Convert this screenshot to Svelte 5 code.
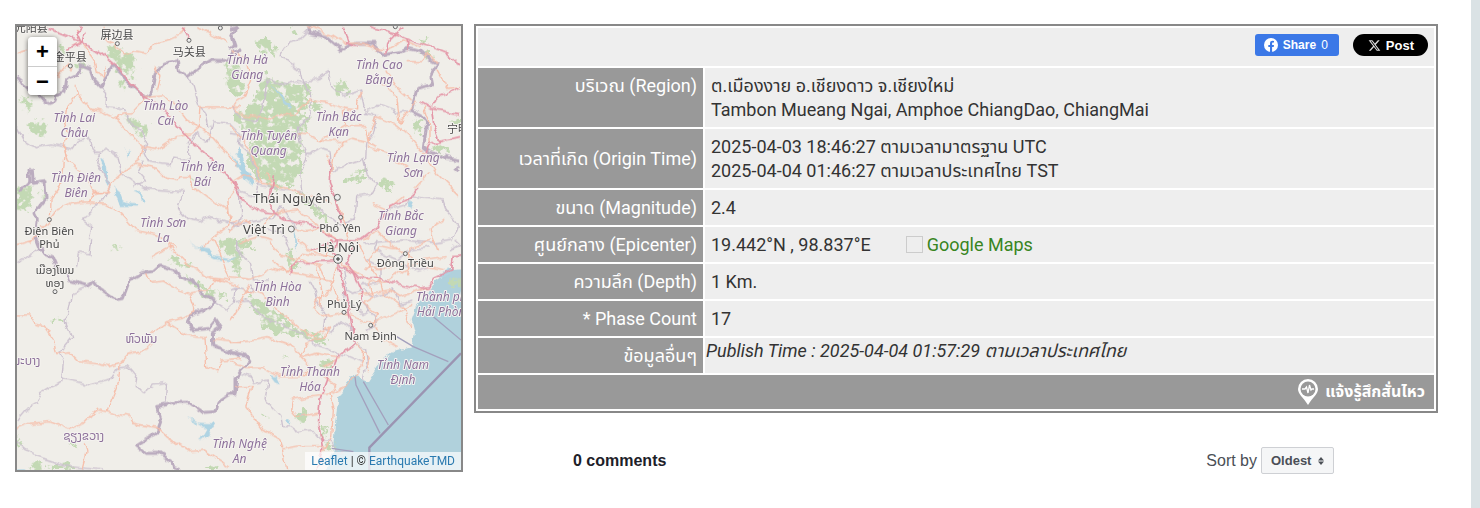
<script lang="ts">
	type Tile = {
		x: number;
		y: number;
		sea?: string;
		forest: string;
		water: string;
		road: string;
		main: string;
		province: string;
		national: string;
	};

	// Map geometry, one entry per quadrant
	const tiles: Tile[] = [
		{
			x: 0,
			y: 30,
			forest:
				'M320 110l25-3 12 15 20 0 27 18 4 30-12 12 15 23-12 4-25-20-22-10-5-25-17-18zM357 213l18-3 2 15-12 12-10-8zM375 320l20 2 30 18 20 10 0 22-12 10-30-22-18-14zM55 272l14-2 24-4 2 18-10 14-5 8-2-18-24-6zM85 342l18-6 20-3 20 8-8 18 4 20-18 6-6-14-22-8zM50 532l40-5 0 50-7 24-33-2zM122 545l12-5 2 28-8-12zM674 165l20-10 26 5v100l-20-10-14-22-6-30zM660 690l20-12 15 6 25 20v16h-62zM335 708l20 0 8 6-25 0zM170 100l20 8 5 20-20-5zM228 165l14-10 18 20-25 5zM565 510l20-6-6 10z',
			water:
				'M300 440l14 10 8 30-2 22 10 20-8 8-10-30-4-30zM340 530l18 15 10 26 20 6 24 4-2 6-30-2-20 0-14-26zM400 545l20-2 15 30-8 2-8-22zM372 410l10 22 12-12-10 24zM710 430l10-20v52l-14-30z',
			road:
				'M50 128L85 118M228 60L245 95L205 118M250 100L285 150 292 185 312 198 318 170M312 48L318 90 345 100M345 110L370 130 400 122 440 130 470 95 510 85 545 70 555 48M595 50L640 75 680 98M225 225L232 250 200 290 195 330 205 370 190 410 195 440 185 520 150 570 148 625M232 250L250 275 275 298 310 305 345 322 372 312 395 312 430 275 432 262M345 322L380 360 410 395 430 412 420 450 385 475 335 520 320 545 280 545 258 500 205 455 190 410M430 260L490 255 530 290 560 330 595 350 570 372 530 380 500 400 470 420 430 412M595 350L600 290 720 292M600 350L640 385 680 430 720 480M410 462L470 475 500 505 535 512 540 500 570 500 580 530 620 560 680 595 690 640 720 630M685 610L680 570 710 530M148 630L170 600 215 580 270 575 320 580 360 610 405 660 470 675 530 715M330 545L275 550 270 575M600 720L640 685 685 650 690 610M470 240L480 200 465 170M170 200L200 165 215 180M50 705L100 690M148 630L90 700',
			main:
				'M130 50L205 80 245 95 300 130 370 190 432 260 500 305 550 370 610 425 660 470 720 540M245 95L232 65 245 50M205 118L250 95 255 70M548 50L568 90',
			province:
				'M302 230L320 250 318 290 372 296 385 330 425 365 440 400 432 430 445 455 510 465 518 445 570 450 568 405 592 370 625 395 640 335 690 340 720 370M560 200L580 230 595 285 620 310 630 350M50 345L75 395 100 412 150 402 220 415 235 390 265 385 285 430 300 430 320 418 355 440 365 490 430 535 550 545 535 595 560 625 600 635 625 622 690 640 712 650M430 455L415 485 437 510 400 530M300 430L290 455 330 530 310 565 260 620 245 625 275 650 268 690M590 365L560 400',
			national:
				'M50 200L85 230 120 262 150 280 165 275 170 255 195 245 200 210 230 195 245 165 270 175 280 205 302 230 320 195 338 165 435 262 455 250 465 190 490 160 528 150 535 185 560 200 600 170 630 150 680 152 705 125 720 115M50 540L75 530 90 515 87 482 97 482 100 520 135 515 138 568 105 610 115 630 108 690 120 720'
		},
		{
			x: 690,
			y: 30,
			forest:
				'M108 180l20 30 50 15 50-5 14 25-10 45-18 20 28 10-20 50-20 20 20 35-10 30 8 28-26 30-10 25-20-15-24 20-40-30-20-8-30-58 20-60-30-32-25-18 0-30 45-20 15-30 10-40zM80 95l30-15 30 45-5 18-25-12-28-14zM0 165l20 10 10 40 12 35-20 15-22-15zM315 215l20-8 20 15-2 30-32-5zM555 350l-10-10 12-18 20 10-4 35-20 5zM610 408l25-5 22 15-24 15-20-10zM340 510l30-20 35-10 0 25-40 10-16 10zM445 520l30-15 12 20-6 20-20-5zM198 540l20 5 30 25 32 40 14 16-4 12-24-14-26-30-30-28zM565 90l20-10 12 10-12 8zM568 128l35-5 0 20-20 6zM20 695l30-10 20 20-18 15-40 0zM180 55l18-4 4 18-12 6zM665 340l25-20v28zM236 272l30 5 8 18-30 5zM130 608l20-6-6 16-12 6zM195 460l20 5-12 12z',
			water:
				'M0 430L30 470 28 435 35 430 50 480 75 520 68 528 40 505zM112 212L155 260 185 290 186 298 150 265zM535 575l20 3-8 20-8-8zM190 650l6 30 5 40-8-20z',
			road:
				'M0 292L40 265 65 205 50 150 8 125M10 295L40 315 130 325 165 310 195 315 235 270 305 280 340 295 380 300 380 275 400 245M0 345L60 420 100 520M205 372L235 375 270 392 310 370 345 350 405 350 415 395 440 410M410 395L370 385 345 395 270 392M340 300L345 350M440 320L500 345 540 380 590 440 620 490 690 560M440 320L420 370 415 410 470 430 540 480M455 215L500 260 510 340 560 270M470 185L500 230 545 270M305 480L315 430 345 395M320 575L345 640 360 690M0 520L40 495 100 520 150 530 250 560 300 580M305 490L290 440M400 690L440 660 500 720M425 580L470 600 520 560M550 540L600 485M530 155L570 155 590 130 625 160M620 180L650 235 690 230M230 50L300 75 340 100 400 100 460 120M470 120L520 90 570 110M620 720L600 660 640 630M0 665L40 630 85 660 130 610 200 600 260 640 300 680M30 700L90 680 130 690M600 400L600 350 580 290M180 650L230 662 270 655 320 688M110 490L125 520 150 530',
			main:
				'M0 505L40 570 90 605 135 610 170 630 250 645 300 680 320 690M135 610L115 570 130 500M300 450L298 520 320 570 335 640M320 690L390 690 440 650 480 590 530 570 565 535M340 50L355 100 380 110M468 130L470 100 520 50M420 50L500 72 540 90 600 110 650 130 690 165M535 90L538 120M568 275L600 295 690 312M605 290L625 260 690 232M605 295L612 350 630 395 600 400 588 430M630 395L690 380M245 720L320 690 315 720',
			province:
				'M235 60L210 85 180 95 150 140 210 180 218 215 245 260 238 320 205 350 210 395 235 435 270 415 300 425 305 480 400 445 412 495 440 520 420 555 380 560 375 620 350 640M5 290L30 320 75 335 95 300 105 250 112 205 170 225 200 215 260 210 295 185 305 230 340 260 395 240 405 285 400 310 440 315 430 370 410 400 405 480M400 310L435 295 450 280 490 295 500 310 545 305M235 435L212 490 220 560 300 620 330 645 375 625M0 370L30 375 25 400 60 430 90 510 85 525 160 540 215 545M85 520L75 560 30 545 35 610 25 650 0 660M0 640L50 640 90 630 130 625 150 590 200 650M440 650L470 600 530 585 545 555 640 570 650 600 685 650 670 690 610 700 520 690 400 700M60 680L110 655 150 665 180 720M690 700L660 720',
			national:
				'M0 58L20 52 5 75 15 105 0 120M235 48L240 70 290 80 335 120 375 100 430 100 460 135 510 125 535 115 575 125 600 150 625 160 600 200 605 225 560 235 545 300 575 315 590 340 580 415 600 430 655 445 690 450M690 470L678 480 690 490'
		},
		{
			x: 0,
			y: 720,
			forest:
				'M155 236h32v13h-32zM510 50l30 15 30 10 5 14-30-6-30-14zM550 100l35 20 20 10 10 20 65 8 0 20-50 0-20-25-40-25zM660 5l50-5 10 25v80l-25-18-15-38zM155 672l60-2 10 20h-75zM90 675l20-12 30 5-5 22-40 0zM50 585l14 24-10 15-4 0zM615 690l20-12 18 12zM335 13l25 6-5 4zM200 600l20 10 8 12-20-5z',
			water:
				'M565 0L590 18 625 25 640 45 690 55 720 50 690 60 640 54 610 36zM590 548L645 550 630 578 600 605 622 566zM560 530l30 18-5 3zM50 685l25 0-10 5z',
			road:
				'M50 225L90 225 105 250 130 255 160 300 170 340 210 335 240 365 290 372 325 380 360 370 390 340 440 330 470 300M440 100L450 125 490 120 530 145 570 162 625 150 640 115 690 120 660 40 640 0M570 165L585 215 550 235 500 245 450 280M500 245L560 285 615 290 620 380 650 395 665 360 720 355M450 50L510 20 560 75 635 115 720 140M505 0L510 30M360 375L355 430 330 490 320 515 390 530 400 550 470 562 500 590 570 635 610 630 690 685M320 515L290 508 250 550 210 570 150 545 90 550 50 565M250 610L258 640 245 690M640 300L720 308',
			main: '',
			province:
				'M50 72L80 50 115 30M265 140L215 160 205 220 195 240 215 290 175 340 190 370 185 415 230 425 270 435 330 420 350 385 385 380 410 410 405 435 430 460 460 435 500 430 495 490M185 420L125 455 110 490 75 510 50 540M230 80L235 38 270 45 275 0M50 605L80 630 130 655 210 680 310 690M645 185L680 208 700 190 705 150 720 145M710 0L710 30 720 50',
			national:
				'M115 0L130 40 155 50 170 85 205 100 212 122 265 138 285 125 300 145 350 178 370 175 390 120 430 98 460 95 480 78 525 90 540 110 580 125 600 155 645 180 630 200 575 225 565 245 580 270 630 265 650 240 665 262 637 280 638 315 720 348M720 405L705 415 705 455 650 490 645 515 610 518 570 490 520 490 470 500 482 545 470 580 410 618 440 640 480 640 515 665 520 682 540 690'
		},
		{
			x: 690,
			y: 720,
			sea: 'M700 85L650 88 640 108 615 125 600 150 560 200 545 240 555 280 548 318 500 330 470 350 440 378 410 425 395 420 375 400 350 430 325 480 315 550 310 620 285 720H700z',
			forest:
				'M50 175l30-5 40 30 50 40 30 25 50 5 35 20 5 20-25 0-50-20-60-10-30 0-25-25-20-35zM165 35l15-5 30 55-10 12-25-25zM0 0l30 10 5 45-25 15-10-10zM655 120l25-8 15 5v35l-25-5zM200 525l15-15 20 5-10 35-30-5zM265 370l15-10 25 5-8 20-20 0zM275 555l15 0 0 40-15 0zM285 612l20-5 8 20-25 5zM155 340l20 12-10 0zM95 520l15 10-10 5zM35 610l10 15-8 0z',
			water: 'M120 405l20 5 10 20-15-5zM655 85l10 15-15 10-30 0zM165 540l15-5-4 20zM210 520l15 5-5 10z',
			road:
				'M0 110L60 118 130 85 180 100 300 120 320 160 340 200M0 308L60 300 110 290 170 310 220 350 260 340 320 350M0 365L50 385 100 385 150 410 220 410 240 380 210 350 230 310 280 290 300 260M15 440L70 440 50 500 100 570 150 600 160 630 210 620 290 620M270 400L320 440 300 465 240 470 190 480 185 510 200 530 265 520M300 465L310 510 305 590 275 640M305 465L360 430 380 400 400 370 400 330 380 310M320 80L300 150 270 170 250 200 280 230 340 215 420 250 500 220 550 190M340 75L400 110 440 130 480 120 520 90 560 70 640 90M380 0L400 50 450 120 460 160 520 200 540 260M400 190L440 220 430 250 460 300 500 320M300 0L290 50 220 40 170 100 130 60M120 5L160 50 220 60 270 80 290 120M385 165L480 150 510 170 600 140M530 100L540 30 600 0M40 150L100 165 130 200 220 270 250 290 300 260M380 310L420 350 415 390M280 380L330 350M0 240L30 190 60 130M160 630L170 690M430 100L420 60 450 20 500 30 560 60 650 50M260 85L275 150 270 200M350 90L330 60 240 30 200 0M400 85L480 85 520 70M420 125L430 170 400 190',
			main:
				'M180 105L190 70 320 65M325 80L345 150 360 230 375 310 320 350 300 400 270 480 265 550 278 625 260 690M325 75L370 100 395 160 398 190M350 70L385 115 440 112 500 130 570 145 600 140 610 115 665 90 670 50 695 48M300 0L320 60M350 70L370 30 365 0',
			province:
				'M0 150L20 145 70 155 65 130M15 185L50 180 100 235 200 270 260 315 320 335 400 370M240 120L255 150 265 190 285 225 280 270 300 280 330 245 360 260 375 310 410 325 415 370 400 400 398 420M340 80L350 150 370 160 400 150 430 170 490 150 510 190 550 180M410 60L450 80 450 130 390 135M35 400L60 410 70 430 115 420 105 480 150 530 155 560 180 560 200 575 245 570 270 600 300 600 320 635 370 635M400 190L435 230 440 255 410 275M440 0L430 30 500 60 550 30 600 20M680 0L690 10M20 0L20 30 65 75 70 120 120 120M500 60L560 90 600 80M345 150L340 180 400 220 420 210',
			national: 'M0 335L45 345 60 365 35 390 20 415 15 465 0 465'
		}
	];

	const seaLimits = 'M1190 1010L1240 1040 1345 1085M1300 950L1383 1020M1065 1130L1068 1155 1140 1300M1090 1145L1165 1275M995 1345L1060 1355';

	type Label = { kind: string; x: number; y: number; lines: string[] };

	const labels: Label[] = [
		{ kind: 'han', x: 94, y: 96, lines: ['元阳县'] },
		{ kind: 'han', x: 351, y: 116, lines: ['屏边县'] },
		{ kind: 'han', x: 568, y: 167, lines: ['马关县'] },
		{ kind: 'han', x: 211, y: 184, lines: ['金平县'] },
		{ kind: 'han', x: 1374, y: 398, lines: ['宁明'] },
		{ kind: 'region', x: 223, y: 367, lines: ['Tỉnh Lai', 'Châu'] },
		{ kind: 'region', x: 497, y: 331, lines: ['Tỉnh Lào', 'Cai'] },
		{ kind: 'region', x: 228, y: 545, lines: ['Tỉnh Điện', 'Biên'] },
		{ kind: 'region', x: 607, y: 514, lines: ['Tỉnh Yên', 'Bái'] },
		{ kind: 'region', x: 490, y: 680, lines: ['Tỉnh Sơn', 'La'] },
		{ kind: 'region', x: 742, y: 192, lines: ['Tỉnh Hà', 'Giang'] },
		{ kind: 'region', x: 1138, y: 207, lines: ['Tỉnh Cao', 'Bằng'] },
		{ kind: 'region', x: 1016, y: 363, lines: ['Tỉnh Bắc', 'Kạn'] },
		{ kind: 'region', x: 806, y: 419, lines: ['Tỉnh Tuyên', 'Quang'] },
		{ kind: 'region', x: 1240, y: 486, lines: ['Tỉnh Lạng', 'Sơn'] },
		{ kind: 'region', x: 1203, y: 660, lines: ['Tỉnh Bắc', 'Giang'] },
		{ kind: 'region', x: 833, y: 874, lines: ['Tỉnh Hòa', 'Bình'] },
		{ kind: 'region', x: 1334, y: 902, lines: ['Thành phố', 'Hải Phòng'] },
		{ kind: 'region', x: 1209, y: 1108, lines: ['Tỉnh Nam', 'Định'] },
		{ kind: 'region', x: 930, y: 1129, lines: ['Tỉnh Thanh', 'Hóa'] },
		{ kind: 'region', x: 719, y: 1343, lines: ['Tỉnh Nghệ', 'An'] },
		{ kind: 'lao', x: 424, y: 1028, lines: ['ຫົວພັນ'] },
		{ kind: 'lao', x: 78, y: 1096, lines: ['ພະບາງ'] },
		{ kind: 'lao', x: 251, y: 1319, lines: ['ຊຽງຂວາງ'] },
		{ kind: 'town', x: 165, y: 821, lines: ['ເມືອງໂພນ', 'ທອງ'] },
		{ kind: 'town', x: 148, y: 704, lines: ['Điện Biên', 'Phủ'] },
		{ kind: 'city', x: 875, y: 609, lines: ['Thái Nguyên'] },
		{ kind: 'city', x: 792, y: 702, lines: ['Việt Trì'] },
		{ kind: 'town', x: 1020, y: 695, lines: ['Phổ Yên'] },
		{ kind: 'city', x: 1015, y: 755, lines: ['Hà Nội'] },
		{ kind: 'town', x: 1216, y: 802, lines: ['Đông Triều'] },
		{ kind: 'town', x: 1033, y: 923, lines: ['Phủ Lý'] },
		{ kind: 'town', x: 1112, y: 1020, lines: ['Nam Định'] }
	];

	const dots = [
		[352, 131], [567, 121], [211, 198], [661, 84], [1186, 80], [148, 659], [165, 875],
		[1022, 652], [1216, 761], [1032, 937], [1112, 976]
	];

	let scale = $state(3);
	let side = $derived((1332 * 3) / scale);
	let sort = $state('Oldest');
</script>

<div class="page">
	<section class="map">
		<svg class="canvas" viewBox="51 78 {side} {side}" role="img" aria-label="Map">
			<defs>
				<!-- roughens the outlines, and thins the woods into patches -->
				<filter id="rough" x="0" y="0" width="1440" height="1440" filterUnits="userSpaceOnUse">
					<feTurbulence type="fractalNoise" baseFrequency="0.03" numOctaves="3" seed="4" />
					<feDisplacementMap in="SourceGraphic" scale="22" xChannelSelector="R" yChannelSelector="G" />
				</filter>
				<filter id="woods" x="0" y="0" width="1440" height="1440" filterUnits="userSpaceOnUse">
					<feTurbulence type="fractalNoise" baseFrequency="0.05" numOctaves="3" seed="9" result="noise" />
					<feDisplacementMap in="SourceGraphic" in2="noise" scale="40" xChannelSelector="R" yChannelSelector="G" result="shape" />
					<feColorMatrix in="noise" values="0 0 0 0 0  0 0 0 0 0  0 0 0 0 0  0 0 7 0 -2.2" result="holes" />
					<feComposite in="shape" in2="holes" operator="in" />
				</filter>
			</defs>
			<g filter="url(#rough)">
				{#each tiles as tile}
					{#if tile.sea}<path class="sea" transform="translate({tile.x} {tile.y})" d={tile.sea} />{/if}
				{/each}
			</g>
			<g filter="url(#woods)">
				{#each tiles as tile}
					<path class="forest" transform="translate({tile.x} {tile.y})" d={tile.forest} />
				{/each}
			</g>
			<g filter="url(#rough)">
				{#each tiles as tile}
					<g transform="translate({tile.x} {tile.y})">
						<path class="water" d={tile.water} />
						<path class="province" d={tile.province} />
						<path class="national" d={tile.national} />
						<path class="road" d={tile.road} />
						<path class="main" d={tile.main} />
					</g>
				{/each}
			</g>
			<path class="sea-limit" d={seaLimits} />
			<path class="sea-limit wide" d="M1383 1060L1108 1343V1410" />
			{#each dots as [x, y]}
				<circle class="dot" cx={x} cy={y} r="6" />
			{/each}
			<circle class="dot" cx="1012" cy="592" r="9" />
			<circle class="dot" cx="874" cy="687" r="9" />
			<circle class="dot" cx="1014" cy="777" r="13" />
			<circle class="dot core" cx="1014" cy="777" r="4" />
			{#each labels as label}
				<text class={label.kind} x={label.x} y={label.y}>
					{#each label.lines as line, i}
						<tspan x={label.x} dy={i * (label.kind === 'region' ? 45 : 40)}>{line}</tspan>
					{/each}
				</text>
			{/each}
		</svg>
		<div class="zoom">
			<button type="button" aria-label="Zoom in" onclick={() => (scale = Math.min(scale + 1, 8))}>+</button>
			<button type="button" aria-label="Zoom out" onclick={() => (scale = Math.max(scale - 1, 3))}>−</button>
		</div>
		<div class="credit"><a href="#leaflet">Leaflet</a> | © <a href="#tmd">EarthquakeTMD</a></div>
	</section>

	<main>
		<table>
			<tbody>
				<tr>
					<td class="share" colspan="2">
						<div class="buttons">
							<button class="fb" type="button">
								<svg viewBox="0 0 14 14" width="14" height="14" aria-hidden="true">
									<circle cx="7" cy="7" r="7" fill="#fff" />
									<path d="M6 14V9H4.300V7H6V5.600C6 3.700 7 2.800 8.700 2.800l1.300.1v1.700h-.9c-.8 0-1 .4-1 1.100V7h1.900l-.3 2H8.100v5z" fill="#3b78e7" />
								</svg>
								<b>Share</b> <span>0</span>
							</button>
							<button class="post" type="button">
								<svg viewBox="0 0 24 24" width="13" height="13" aria-hidden="true">
									<path d="M18.200 2.200h3.400l-7.300 8.300 8.500 11.300H16.200l-5.200-6.900-6 6.900H1.600l7.800-8.900L1.200 2.200H8l4.700 6.300zm-1.200 17.600h1.900L7.100 4.100H5.100z" fill="#ddd" />
								</svg>
								<b>Post</b>
							</button>
						</div>
					</td>
				</tr>
				<tr class="tall">
					<th class="top" scope="row">บริเวณ (Region)</th>
					<td>ต.เมืองงาย อ.เชียงดาว จ.เชียงใหม่<br />Tambon Mueang Ngai, Amphoe ChiangDao, ChiangMai</td>
				</tr>
				<tr class="tall">
					<th scope="row">เวลาที่เกิด (Origin Time)</th>
					<td>2025-04-03 18:46:27 ตามเวลามาตรฐาน UTC<br />2025-04-04 01:46:27 ตามเวลาประเทศไทย TST</td>
				</tr>
				<tr>
					<th scope="row">ขนาด (Magnitude)</th>
					<td>2.4</td>
				</tr>
				<tr>
					<th scope="row">ศูนย์กลาง (Epicenter)</th>
					<td>
						<div class="place">
							<span>19.442°N , 98.837°E</span>
							<a href="#maps"><i class="thumb"></i>Google Maps</a>
						</div>
					</td>
				</tr>
				<tr>
					<th scope="row">ความลึก (Depth)</th>
					<td>1 Km.</td>
				</tr>
				<tr>
					<th scope="row">* Phase Count</th>
					<td>17</td>
				</tr>
				<tr>
					<th scope="row">ข้อมูลอื่นๆ</th>
					<td class="note">Publish Time : 2025-04-04 01:57:29 ตามเวลาประเทศไทย</td>
				</tr>
				<tr>
					<td class="report" colspan="2">
						<a href="#report">
							<svg viewBox="0 0 20 26" width="20" height="26" aria-hidden="true">
								<path d="M10 0a10 10 0 0 0-10 10c0 5 5 8 10 16 5-8 10-11 10-16A10 10 0 0 0 10 0z" fill="#fff" />
								<circle cx="10" cy="10" r="7.500" fill="#999" />
								<path d="M4 10h3l1.500-2 1.500 6 1.500-8 1.500 5 1-1h2" fill="none" stroke="#fff" stroke-width="1.300" />
							</svg>
							<span>แจ้งรู้สึกสั่นไหว</span>
						</a>
					</td>
				</tr>
			</tbody>
		</table>

		<div class="comments">
			<b>0 comments</b>
			<div class="sort">
				<label for="sort">Sort by</label>
				<span class="picker">
					<select id="sort" bind:value={sort}>
						<option>Oldest</option>
					</select>
					<svg viewBox="0 0 6 8" width="6" height="8" aria-hidden="true">
						<path d="M0 3.500L3 0l3 3.500zM0 4.500h6L3 8z" fill="#4b4f56" />
					</svg>
				</span>
			</div>
		</div>
	</main>
</div>

<style>
	:global(body) {
		background: #fff;
	}

	.page {
		box-sizing: border-box;
		min-height: 100vh;
		display: grid;
		grid-template-columns: 448fr 964fr;
		align-items: start;
		gap: 11px;
		padding: 24px 33px 0 15px;
		border-right: 9px solid #dae2e5;
		font-family: Roboto, 'Noto Sans Thai', 'Noto Sans', sans-serif;
		color: #333;
	}

	.map {
		position: relative;
		border: 2px solid #888;
		background: #f0eee9;
		overflow: hidden;
	}

	.canvas {
		display: block;
		width: 100%;
		aspect-ratio: 1;
	}

	.canvas path {
		fill: none;
		stroke-linejoin: round;
	}

	.canvas .sea {
		fill: #b0d1dc;
	}

	.canvas .forest {
		fill: #c3d9b4;
	}

	.canvas .water {
		fill: #b0d4e3;
	}

	.canvas .road {
		stroke: #f6bfab;
		stroke-width: 4;
	}

	.canvas .main {
		stroke: #e496a7;
		stroke-width: 5;
	}

	.canvas .province {
		stroke: #cbc0ce;
		stroke-width: 4;
	}

	.canvas .national {
		stroke: #bbacbf;
		stroke-width: 9;
	}

	.canvas .sea-limit {
		stroke: #a3a0bd;
		stroke-width: 4;
	}

	.canvas .wide {
		stroke: #9b94b2;
		stroke-width: 7;
	}

	.dot {
		fill: #eee;
		stroke: #666;
		stroke-width: 3;
	}

	.core {
		fill: #555;
	}

	text {
		font-family: 'Noto Sans', 'Noto Sans Lao', 'Noto Sans CJK SC', sans-serif;
		font-size: 36px;
		text-anchor: middle;
		fill: #484848;
		stroke: #f5f3f0;
		stroke-width: 6px;
		stroke-linejoin: round;
		paint-order: stroke;
	}

	.region {
		font-style: italic;
		fill: #8d719b;
	}

	.lao {
		fill: #8d719b;
	}

	.han,
	.town {
		font-size: 33px;
	}

	.city {
		font-size: 39px;
	}

	.zoom {
		position: absolute;
		top: 11px;
		left: 11px;
		border-radius: 4px;
		box-shadow: 0 1px 5px rgba(0, 0, 0, 0.6);
		overflow: hidden;
	}

	.zoom button {
		display: block;
		width: 29px;
		height: 29px;
		padding: 0;
		border: 0;
		background: #fff;
		font: bold 22px/29px 'Liberation Sans', sans-serif;
		color: #000;
	}

	.zoom button + button {
		border-top: 1px solid #ccc;
	}

	.credit {
		position: absolute;
		right: 0;
		bottom: 0;
		padding: 0 6px;
		background: rgba(255, 255, 255, 0.7);
		font-size: 12px;
		line-height: 18px;
	}

	.credit a {
		color: #2a7ab0;
		text-decoration: none;
	}

	table {
		width: 100%;
		border: 2px solid #888;
		border-spacing: 2px;
		font-size: 18px;
		line-height: 24px;
	}

	th,
	td {
		height: 35px;
		box-sizing: border-box;
		padding: 0 6px;
		background: #eee;
		text-align: left;
	}

	th {
		width: 225px;
		background: #999;
		color: #fff;
		font-weight: 400;
		text-align: right;
	}

	.tall th,
	.tall td {
		height: 59px;
	}

	th.top {
		padding-top: 6px;
		vertical-align: top;
	}

	.share {
		height: 38px;
		vertical-align: top;
	}

	.buttons {
		display: flex;
		justify-content: flex-end;
		gap: 14px;
		padding-top: 6px;
	}

	.buttons button {
		display: flex;
		align-items: center;
		height: 22px;
		border: 0;
		font: 13px 'Liberation Sans', sans-serif;
		color: #fff;
	}

	.buttons .fb {
		gap: 5px;
		padding: 0 11px 0 9px;
		border-radius: 3px;
		background: #3b78e7;
		font-size: 12px;
	}

	.post {
		gap: 5px;
		padding: 0 14px 0 15px;
		border-radius: 11px;
		background: #000;
	}

	.place {
		display: flex;
		gap: 35px;
	}

	.place a {
		display: flex;
		align-items: center;
		gap: 4px;
		color: #38851f;
		text-decoration: none;
	}

	.thumb {
		box-sizing: border-box;
		width: 17px;
		height: 17px;
		border: 1px solid #ccc;
	}

	.note {
		padding: 0 1px 10px;
		font-style: italic;
	}

	.report {
		height: 34px;
		background: #999;
	}

	.report a {
		display: flex;
		justify-content: flex-end;
		align-items: center;
		gap: 7px;
		padding-right: 3px;
		color: #fff;
		font-size: 16px;
		font-weight: 700;
		text-decoration: none;
	}

	.comments {
		display: flex;
		justify-content: space-between;
		align-items: center;
		padding: 34px 104px 0 99px;
		font: 16px 'Liberation Sans', sans-serif;
		color: #1d2129;
	}

	.sort {
		display: flex;
		align-items: center;
		gap: 4px;
		color: #4b4f56;
	}

	.picker {
		position: relative;
	}

	select {
		display: block;
		appearance: none;
		height: 27px;
		padding: 0 21px 0 9px;
		border: 1px solid #ced0d4;
		border-radius: 2px;
		background: #f5f6f7;
		font: bold 13px 'Liberation Sans', sans-serif;
		color: #4b4f56;
	}

	.picker svg {
		position: absolute;
		top: 10px;
		right: 10px;
		pointer-events: none;
	}
</style>
